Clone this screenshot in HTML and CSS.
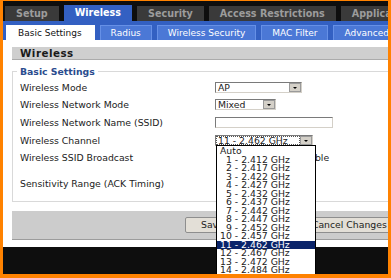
FILE: index.html
```html
<!DOCTYPE html>
<html lang="en">
<head>
  <meta charset="UTF-8" />
  <title>Wireless - Basic Settings</title>
  <link rel="stylesheet" href="styles.css">
</head>
<body>
  <div class="frame">
    <div class="page">
      <ul class="tabs">
        <li class="tab">Setup</li>
        <li class="tab active">Wireless</li>
        <li class="tab">Security</li>
        <li class="tab">Access Restrictions</li>
        <li class="tab">Applications &amp; Gaming</li>
      </ul>
      <ul class="subtabs">
        <li class="subtab current">Basic Settings</li>
        <li class="subtab">Radius</li>
        <li class="subtab">Wireless Security</li>
        <li class="subtab">MAC Filter</li>
        <li class="subtab">Advanced Settings</li>
      </ul>

      <div class="content">
        <div class="section-head">Wireless</div>

        <fieldset class="group">
          <legend>Basic Settings</legend>
          <div class="row">
            <span class="label">Wireless Mode</span>
            <div class="select w-mode"><span class="value">AP</span><span class="arrow"></span></div>
          </div>
          <div class="row">
            <span class="label">Wireless Network Mode</span>
            <div class="select w-net"><span class="value">Mixed</span><span class="arrow"></span></div>
          </div>
          <div class="row">
            <span class="label">Wireless Network Name (SSID)</span>
            <input class="text" type="text" value="" />
          </div>
          <div class="row">
            <span class="label">Wireless Channel</span>
            <div class="select w-chan open">
              <span class="value focus">11 - 2.462 GHz</span><span class="arrow"></span>
              <ul class="menu">
                <li>Auto</li>
                <li class="pad">1 - 2.412 GHz</li>
                <li class="pad">2 - 2.417 GHz</li>
                <li class="pad">3 - 2.422 GHz</li>
                <li class="pad">4 - 2.427 GHz</li>
                <li class="pad">5 - 2.432 GHz</li>
                <li class="pad">6 - 2.437 GHz</li>
                <li class="pad">7 - 2.442 GHz</li>
                <li class="pad">8 - 2.447 GHz</li>
                <li class="pad">9 - 2.452 GHz</li>
                <li>10 - 2.457 GHz</li>
                <li class="selected">11 - 2.462 GHz</li>
                <li>12 - 2.467 GHz</li>
                <li>13 - 2.472 GHz</li>
                <li>14 - 2.484 GHz</li>
              </ul>
            </div>
          </div>
          <div class="row">
            <span class="label">Wireless SSID Broadcast</span>
            <div class="radios">
              <label><input type="radio" name="ssid" checked /> Enable</label>
              <label><input type="radio" name="ssid" /> Disable</label>
            </div>
          </div>
          <div class="row spaced">
            <span class="label">Sensitivity Range (ACK Timing)</span>
            <input class="text short" type="text" value="2000" />
          </div>
        </fieldset>

        <div class="buttons">
          <button>Save Settings</button>
          <button>Cancel Changes</button>
        </div>
      </div>
    </div>
  </div>
</body>
</html>
```

FILE: styles.css
```css
:root {
  --orange: #ff8200;
  --blue: #3360c2;
  --blue-tab: #4b78d6;
  --text: #222;
}
* { box-sizing: border-box; }
html, body {
  margin: 0;
  background: var(--orange);
}
body {
  font-family: 'DejaVu Sans', Verdana, sans-serif;
  font-size: 9.3px;
  color: var(--text);
}
ul {
  list-style: none;
  margin: 0;
  padding: 0;
}
.frame {
  margin: 1px 3px 0 3px;
  height: 273px;
  background: #0e0e0e;
  overflow: hidden;
}
.page {
  width: 430px;
}

/* top tabs */
.tabs {
  display: flex;
  align-items: flex-end;
  gap: 5px;
  height: 20px;
  padding: 4px 0 0 2px;
}
.tab {
  height: 15px;
  line-height: 15px;
  padding: 0 11px;
  background: #3a3a3a;
  color: #9c9c9c;
  font-weight: bold;
  font-size: 9.6px;
  white-space: nowrap;
}
.tab.active {
  height: 16px;
  background: var(--blue);
  color: #fff;
}

/* sub tabs */
.subtabs {
  display: flex;
  gap: 5px;
  height: 19px;
  padding: 4px 0 0 3px;
  background: var(--blue);
}
.subtab {
  height: 15px;
  line-height: 14px;
  padding: 0 10px;
  background: var(--blue-tab);
  border: 1px solid #6690e6;
  border-bottom: none;
  color: #fff;
  font-size: 9px;
  white-space: nowrap;
}
.subtab.current {
  padding: 0 12px 0 11px;
  background: #fff;
  border-color: #fff;
  color: #111;
}

/* content */
.content {
  background: #fff;
  padding: 7px 0 7px 9px;
}
.section-head {
  height: 13px;
  line-height: 12px;
  padding-left: 8px;
  background: #cfcfcf;
  border-bottom: 1px solid #ababab;
  font-weight: bold;
  font-size: 10.3px;
  letter-spacing: 0.5px;
  color: #1a1a1a;
}
.group {
  margin: 6px 0 0 0;
  padding: 1.5px 0 8px 4px;
  border: 1px solid #d9d9d9;
}
.group legend {
  padding: 0 3px;
  font-weight: bold;
  color: #2a4c8e;
  line-height: 11px;
}
.row {
  display: grid;
  grid-template-columns: 198px auto;
  align-items: center;
  height: 17.6px;
}
.row.spaced {
  margin-top: 8.5px;
}
.label {
  padding-left: 3px;
  white-space: nowrap;
}

/* form controls */
.select {
  position: relative;
  display: flex;
  height: 11px;
  border: 1px solid #7a7a7a;
  border-right-color: #d4d0c8;
  border-bottom-color: #d4d0c8;
  background: #fff;
}
.select .value {
  flex: 1;
  padding-left: 2px;
  line-height: 9px;
  white-space: nowrap;
}
.select .value.focus {
  outline: 1px dotted #555;
  outline-offset: -1px;
}
.select .arrow {
  position: relative;
  width: 12px;
  background: #d4d0c8;
  border: 1px solid #9a9a9a;
}
.select .arrow::after {
  content: "";
  position: absolute;
  left: 3px;
  top: 3px;
  border-left: 2.5px solid transparent;
  border-right: 2.5px solid transparent;
  border-top: 2px solid #000;
}
.w-mode { width: 87px; }
.w-net { width: 61px; }
.w-chan { width: 98px; }
.text {
  width: 118px;
  height: 11px;
  padding: 0 2px;
  border: 1px solid #7a7a7a;
  border-right-color: #d4d0c8;
  border-bottom-color: #d4d0c8;
  font: inherit;
  line-height: 9px;
}
.text.short {
  width: 40px;
  margin-left: 6px;
}

.menu {
  position: absolute;
  top: 100%;
  left: 0;
  width: 100px;
  padding: 1.5px 0 0;
  background: #fff;
  border: 1px solid #000;
  z-index: 2;
}
.menu li {
  height: 8.5px;
  line-height: 8.5px;
  padding-left: 3px;
  white-space: nowrap;
}
.menu li.pad { padding-left: 9px; }
.menu li.selected {
  background: #0a246a;
  color: #fff;
}

.radios {
  display: flex;
  gap: 18px;
  margin-left: 4px;
  white-space: nowrap;
}
.radios label {
  display: flex;
  align-items: center;
}
.radios input {
  width: 10px;
  height: 10px;
  margin: 0 3px 0 0;
}

/* button bar */
.buttons {
  display: flex;
  align-items: center;
  gap: 15px;
  margin-top: 9px;
  height: 29px;
  padding-left: 173px;
  background: #cccccc;
  border-bottom: 1px solid #9c9c9c;
}
.buttons button {
  height: 16px;
  padding: 0 15px;
  font: inherit;
  color: #222;
  background: #e3dfd7;
  border: 1px solid #8e8e8e;
  border-radius: 2px;
  white-space: nowrap;
}
```
